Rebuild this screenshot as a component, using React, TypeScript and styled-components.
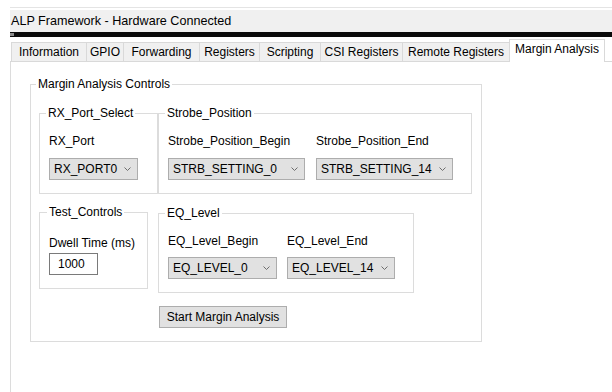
import { createGlobalStyle } from "styled-components";
import styled from "styled-components";

const GlobalStyle = createGlobalStyle`
    html, body {
        margin: 0;
        padding: 0;
        background: #ffffff;
    }
    body {
        font-family: "Liberation Sans", Arial, sans-serif;
        font-size: 12px;
        color: #000;
    }
`;

const Window = styled.div`
    width: 612px;
    height: 392px;
    overflow: hidden;
    padding-left: 10px;
    box-sizing: border-box;
    background: #fff;
`;

const TopStrip = styled.div`
    height: 7px;
    border-bottom: 1px solid #e4e4e4;
    margin-bottom: 2px;
`;

const TitleBar = styled.div`
    height: 22px;
    line-height: 22px;
    padding-left: 1px;
    background: #f0f0f0;
    font-size: 12.6px;
    white-space: nowrap;
`;

const Splitter = styled.div`
    height: 5px;
    background: #0a0a0a;
    position: relative;

    &::before {
        content: "";
        position: absolute;
        left: 0;
        top: 1px;
        width: 4px;
        height: 3px;
        background: #8a8a8a;
    }
`;

const TabBar = styled.div`
    display: flex;
    align-items: flex-end;
    height: 24px;
    padding-left: 1px;
    border-bottom: 1px solid #d9d9d9;
`;

const Tab = styled.div<{ $w: number; $active?: boolean }>`
    width: ${(p) => p.$w}px;
    box-sizing: border-box;
    height: ${(p) => (p.$active ? 23 : 19)}px;
    margin-bottom: ${(p) => (p.$active ? -1 : 0)}px;
    margin-left: -1px;
    border: 1px solid #d9d9d9;
    border-bottom: none;
    background: ${(p) => (p.$active ? "#ffffff" : "#f0f0f0")};
    display: flex;
    align-items: center;
    justify-content: center;
    padding-bottom: ${(p) => (p.$active ? 4 : 0)}px;
    white-space: nowrap;
    position: relative;
    z-index: ${(p) => (p.$active ? 1 : 0)};

    &:first-child {
        margin-left: 0;
    }
`;

const Panel = styled.div`
    height: 330px;
    border-left: 1px solid #dcdcdc;
    padding: 22px 0 0 19px;
    box-sizing: border-box;
`;

const Group = styled.div<{ $w: number; $h: number }>`
    position: relative;
    width: ${(p) => p.$w}px;
    height: ${(p) => p.$h}px;
    box-sizing: border-box;
    border: 1px solid #dcdcdc;
`;

const Legend = styled.span<{ $left: number }>`
    position: absolute;
    top: -8px;
    left: ${(p) => p.$left}px;
    padding: 0 2px;
    line-height: 14px;
    background: #fff;
    white-space: nowrap;
`;

const OuterBody = styled.div`
    padding: 28px 0 0 8px;
    display: grid;
    grid-template-columns: 119px 314px;
    align-items: start;
`;

const InnerBody = styled.div<{ $top: number; $gap: number }>`
    display: flex;
    gap: ${(p) => p.$gap}px;
    padding: ${(p) => p.$top}px 0 0 9px;
`;

const Field = styled.div<{ $gap: number }>`
    display: flex;
    flex-direction: column;
    gap: ${(p) => p.$gap}px;
`;

const Label = styled.div`
    line-height: 14px;
    white-space: nowrap;
`;

const SelectBox = styled.div<{ $w: number }>`
    width: ${(p) => p.$w}px;
    height: 22px;
    box-sizing: border-box;
    border: 1px solid #adadad;
    background: #e1e1e1;
    display: flex;
    align-items: center;
    justify-content: space-between;
    padding: 0 6px 0 4px;
    white-space: nowrap;
`;

const TextInput = styled.div`
    width: 49px;
    height: 22px;
    box-sizing: border-box;
    border: 1px solid #7a7a7a;
    background: #fff;
    display: flex;
    align-items: center;
    padding-left: 8px;
`;

const SecondRow = styled.div<{ $top: number }>`
    margin-top: ${(p) => p.$top}px;
`;

const Button = styled.div`
    grid-column: 2;
    margin: 13px 0 0 1px;
    width: 128px;
    height: 22px;
    box-sizing: border-box;
    border: 1px solid #adadad;
    background: #e1e1e1;
    display: flex;
    align-items: center;
    justify-content: center;
    white-space: nowrap;
`;

const Chevron = () => (
    <svg width="7" height="4" viewBox="0 0 7 4">
        <polyline points="0.5,0.5 3.5,3.5 6.5,0.5" fill="none" stroke="#6d6d6d" strokeWidth="1" />
    </svg>
);

const Select = ({ value, w }: { value: string; w: number }) => (
    <SelectBox $w={w}>
        <span>{value}</span>
        <Chevron />
    </SelectBox>
);

const tabs = [
    { name: "Information", w: 76 },
    { name: "GPIO", w: 38 },
    { name: "Forwarding", w: 77 },
    { name: "Registers", w: 61 },
    { name: "Scripting", w: 62 },
    { name: "CSI Registers", w: 83 },
    { name: "Remote Registers", w: 108 },
    { name: "Margin Analysis", w: 96, active: true },
];

export default function App() {
    return (
        <Window>
            <GlobalStyle />
            <TopStrip />
            <TitleBar>ALP Framework - Hardware Connected</TitleBar>
            <Splitter />
            <TabBar>
                {tabs.map((t) => (
                    <Tab key={t.name} $w={t.w} $active={t.active}>
                        {t.name}
                    </Tab>
                ))}
            </TabBar>
            <Panel>
                <Group $w={452} $h={258}>
                    <Legend $left={5}>Margin Analysis Controls</Legend>
                    <OuterBody>
                        <Group $w={119} $h={81}>
                            <Legend $left={6}>RX_Port_Select</Legend>
                            <InnerBody $top={20} $gap={0}>
                                <Field $gap={10}>
                                    <Label>RX_Port</Label>
                                    <Select value="RX_PORT0" w={89} />
                                </Field>
                            </InnerBody>
                        </Group>
                        <Group $w={314} $h={81}>
                            <Legend $left={6}>Strobe_Position</Legend>
                            <InnerBody $top={20} $gap={11}>
                                <Field $gap={10}>
                                    <Label>Strobe_Position_Begin</Label>
                                    <Select value="STRB_SETTING_0" w={137} />
                                </Field>
                                <Field $gap={10}>
                                    <Label>Strobe_Position_End</Label>
                                    <Select value="STRB_SETTING_14" w={137} />
                                </Field>
                            </InnerBody>
                        </Group>

                        <SecondRow $top={18}>
                            <Group $w={109} $h={77}>
                                <Legend $left={7}>Test_Controls</Legend>
                                <InnerBody $top={23} $gap={0}>
                                    <Field $gap={3}>
                                        <Label>Dwell Time (ms)</Label>
                                        <TextInput>1000</TextInput>
                                    </Field>
                                </InnerBody>
                            </Group>
                        </SecondRow>
                        <SecondRow $top={19}>
                            <Group $w={256} $h={80}>
                                <Legend $left={6}>EQ_Level</Legend>
                                <InnerBody $top={20} $gap={10}>
                                    <Field $gap={9}>
                                        <Label>EQ_Level_Begin</Label>
                                        <Select value="EQ_LEVEL_0" w={109} />
                                    </Field>
                                    <Field $gap={9}>
                                        <Label>EQ_Level_End</Label>
                                        <Select value="EQ_LEVEL_14" w={108} />
                                    </Field>
                                </InnerBody>
                            </Group>
                        </SecondRow>

                        <Button>Start Margin Analysis</Button>
                    </OuterBody>
                </Group>
            </Panel>
        </Window>
    );
}
